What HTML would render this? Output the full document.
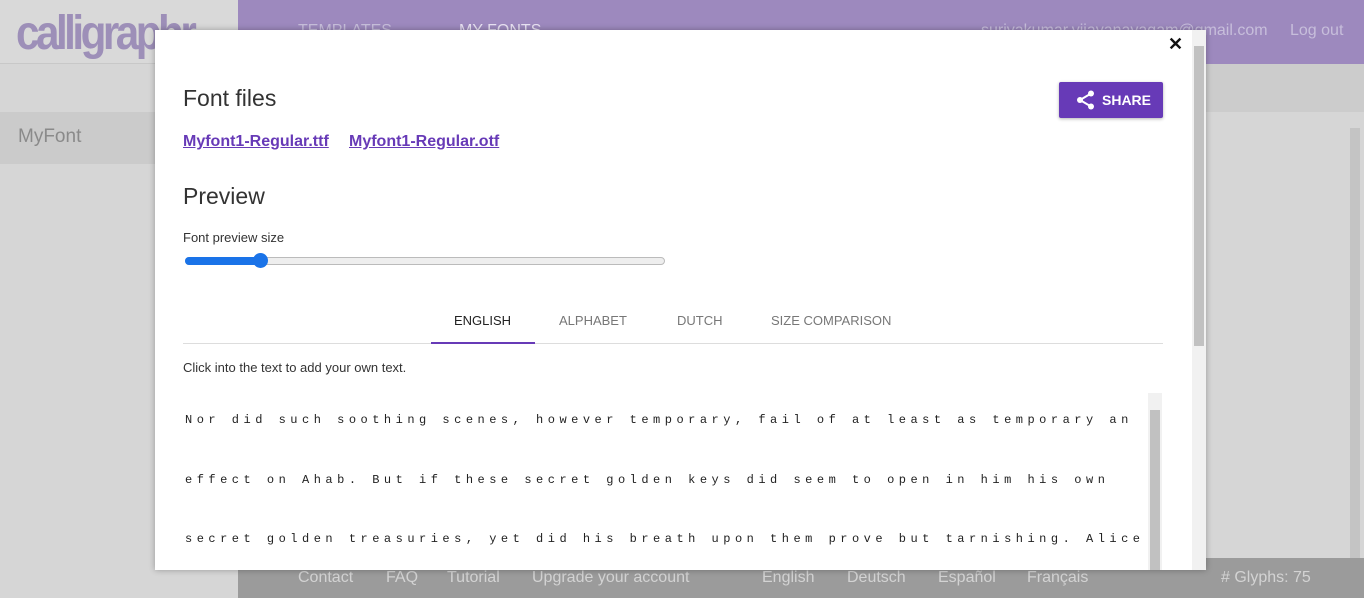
<!DOCTYPE html>
<html><head><meta charset="utf-8"><style>
*{box-sizing:border-box;margin:0;padding:0}
body{width:1364px;height:598px;overflow:hidden;position:relative;background:#d6d6d6;font-family:"Liberation Sans",sans-serif}
.hdr{position:absolute;left:238px;top:0;width:1126px;height:64px;background:#9d89be}
.logo{position:absolute;left:0;top:0;width:238px;height:64px;background:#d9d9d9;border-bottom:1px solid #c8c8c8;overflow:hidden}
.logo span{position:absolute;left:16px;top:6px;font:bold 48px "Liberation Sans",sans-serif;color:#9d8fb8;letter-spacing:-4px;transform:scaleX(0.88);transform-origin:left top}
.nav{position:absolute;top:22px;color:#c7bedb;font-size:16px}
.sub{position:absolute;left:238px;top:64px;width:1126px;height:48px;background:#cccccc}
.side{position:absolute;left:0;top:112px;width:238px;height:52px;background:#cbcbcb;color:#8a8a8a;font-size:19px;padding:14px 18px}
.main{position:absolute;left:238px;top:112px;width:1126px;height:446px;background:#d6d6d6}
.foot{position:absolute;left:238px;top:558px;width:1126px;height:40px;background:#9b9b9b;color:#d3d3d3;font-size:16px}
.foot span{position:absolute;top:11px}
.modal{position:absolute;left:155px;top:30px;width:1051px;height:540px;background:#fff;box-shadow:0 0 6px rgba(0,0,0,.3);overflow:hidden}
.msb{position:absolute;right:0;top:0;width:14px;height:540px;background:#f1f1f1}
.msb div{position:absolute;left:2px;top:16px;width:10px;height:300px;background:#c1c1c1}
h2{position:absolute;font-weight:normal;font-size:23px;color:#333}
a{position:absolute;top:103px;color:#673ab7;font-weight:bold;font-size:16px;text-decoration:underline}
.share{position:absolute;left:904px;top:52px;width:104px;height:36px;background:#673ab7;border-radius:2px;box-shadow:0 1px 3px rgba(0,0,0,.3);color:#fff;font-weight:bold;font-size:14px}
.tab{position:absolute;top:283px;font-size:13px;color:#777}
.hw{position:absolute;left:30px;font-family:"Liberation Mono",monospace;font-size:12px;color:#222;letter-spacing:4.5px;white-space:nowrap}
</style></head><body>
<div class="logo"><span>calligraphr</span></div>
<div class="hdr"></div>
<div class="nav" style="left:298px">TEMPLATES</div>
<div class="nav" style="left:459px;color:#e8e2f2">MY FONTS</div>
<div class="nav" style="left:981px">suriyakumar.vijayanayagam@gmail.com</div>
<div class="nav" style="left:1290px">Log out</div>
<div class="sub"></div>
<div class="side">MyFont</div>
<div class="main"><div style="position:absolute;right:4px;top:16px;width:10px;height:430px;background:#c4c4c4"></div></div>
<div class="foot">
<span style="left:60px">Contact</span><span style="left:148px">FAQ</span><span style="left:209px">Tutorial</span><span style="left:294px">Upgrade your account</span>
<span style="left:524px">English</span><span style="left:609px">Deutsch</span><span style="left:700px">Español</span><span style="left:789px">Français</span><span style="left:983px"># Glyphs: 75</span></div>
<div class="modal">
<div class="msb"><div></div></div>
<div style="position:absolute;left:1013px;top:4px;font-size:18px;font-weight:bold;color:#111">✕</div>
<h2 style="left:28px;top:55px">Font files</h2>
<a style="left:28px">Myfont1-Regular.ttf</a><a style="left:194px">Myfont1-Regular.otf</a>
<div class="share"><svg style="position:absolute;left:17px;top:8px" width="20" height="20" viewBox="0 0 20 20"><circle cx="15" cy="3.5" r="3" fill="#fff"/><circle cx="4" cy="10" r="3" fill="#fff"/><circle cx="15" cy="16.5" r="3" fill="#fff"/><path d="M15 3.5L4 10L15 16.5" stroke="#fff" stroke-width="2" fill="none"/></svg><span style="position:absolute;left:43px;top:10px">SHARE</span></div>
<h2 style="left:28px;top:153px">Preview</h2>
<div style="position:absolute;left:28px;top:200px;font-size:13px;color:#333">Font preview size</div>
<div style="position:absolute;left:30px;top:227px;width:480px;height:8px;border:1px solid #bbb;border-radius:4px;background:#eee"></div>
<div style="position:absolute;left:30px;top:227px;width:76px;height:8px;border-radius:4px;background:#1a73e8"></div>
<div style="position:absolute;left:98px;top:223px;width:15px;height:15px;border-radius:50%;background:#1a73e8"></div>
<div class="tab" style="left:299px;color:#222">ENGLISH</div>
<div class="tab" style="left:404px">ALPHABET</div>
<div class="tab" style="left:522px">DUTCH</div>
<div class="tab" style="left:616px">SIZE COMPARISON</div>
<div style="position:absolute;left:28px;top:313px;width:980px;height:1px;background:#ddd"></div>
<div style="position:absolute;left:276px;top:312px;width:104px;height:2px;background:#673ab7"></div>
<div style="position:absolute;left:28px;top:330px;font-size:13px;color:#333">Click into the text to add your own text.</div>
<div style="position:absolute;left:993px;top:363px;width:14px;height:177px;background:#f1f1f1"><div style="position:absolute;left:2px;top:17px;width:10px;height:160px;background:#c1c1c1"></div></div>
<div class="hw" style="top:383px">Nor did such soothing scenes, however temporary, fail of at least as temporary an</div>
<div class="hw" style="top:443px">effect on Ahab. But if these secret golden keys did seem to open in him his own</div>
<div class="hw" style="top:502px">secret golden treasuries, yet did his breath upon them prove but tarnishing. Alice</div>
</div>
</body></html>
